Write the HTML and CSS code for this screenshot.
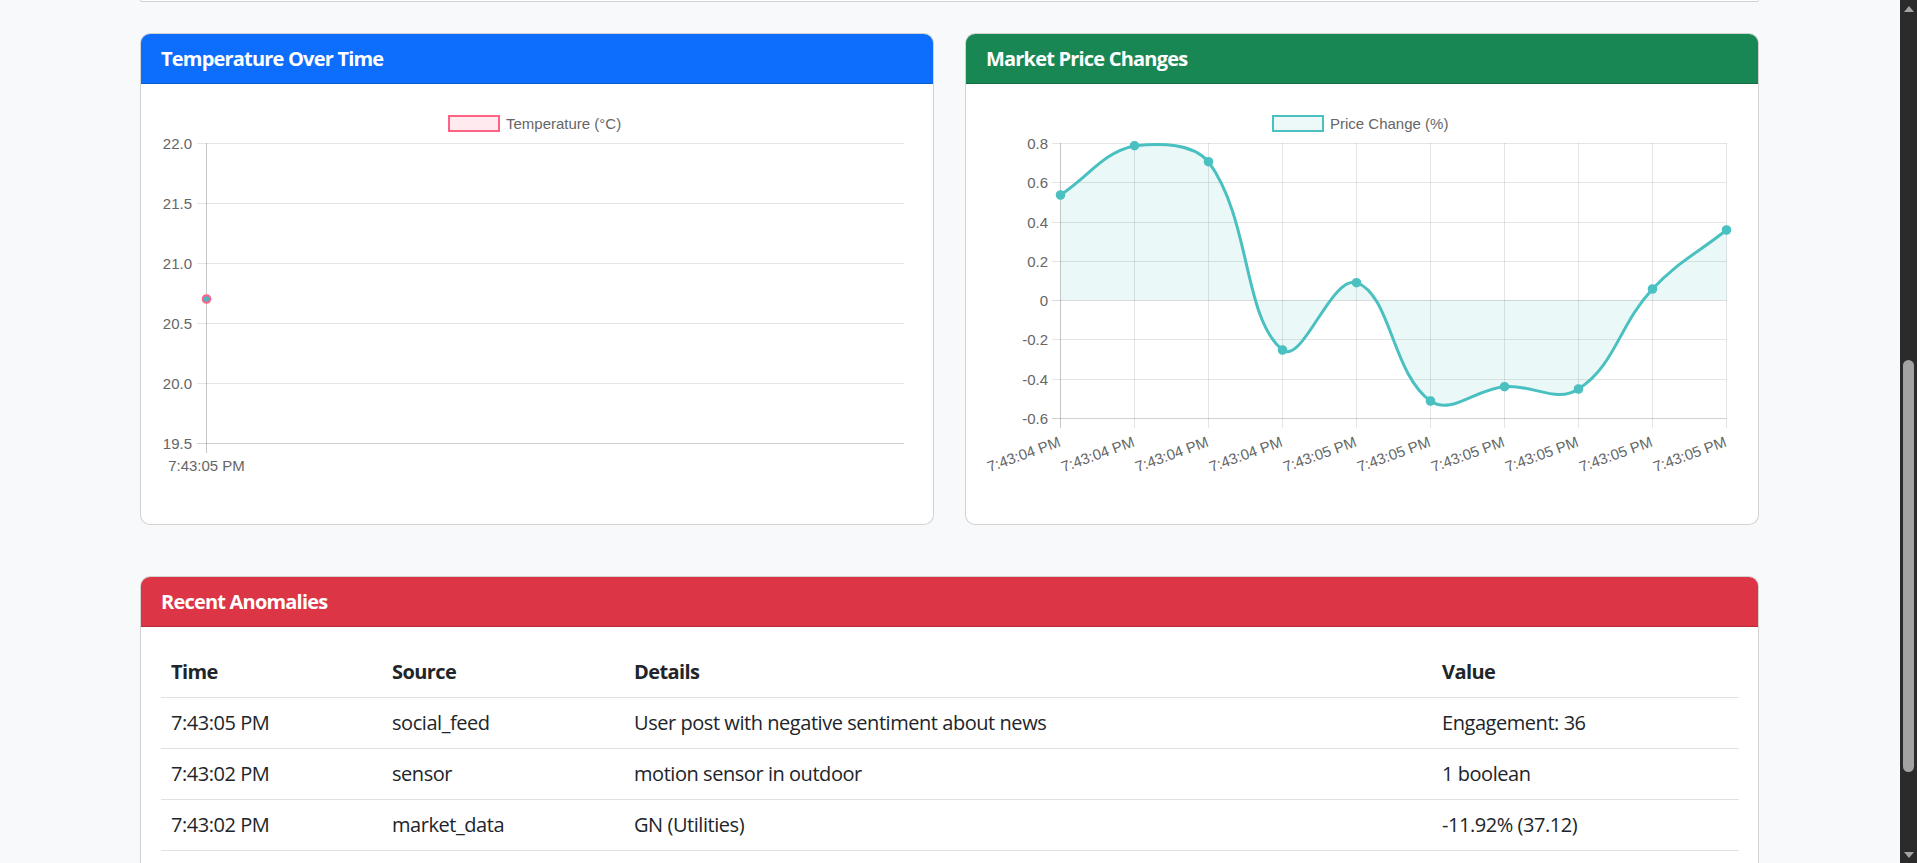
FILE: index.html
```html
<!DOCTYPE html>
<html lang="en">
<head>
<meta charset="utf-8">
<title>Dashboard</title>
<link rel="stylesheet" href="styles.css">
</head>
<body>
<div class="viewport">
  <main class="page">
    <div class="container">
      <div class="card-stub"></div>

      <div class="chart-row">
        <section class="card">
          <header class="card-header header-blue"><h5 class="card-title">Temperature Over Time</h5></header>
          <div class="card-body">
            <svg class="chart" viewBox="0 0 752 400" xmlns="http://www.w3.org/2000/svg">
              <rect class="legend-box-pink" x="288" y="12" width="50" height="15"/>
              <text class="chart-text" x="345" y="24.5">Temperature (°C)</text>

              <line class="grid" x1="36" y1="39.5" x2="743" y2="39.5"/>
              <line class="grid" x1="36" y1="99.5" x2="743" y2="99.5"/>
              <line class="grid" x1="36" y1="159.5" x2="743" y2="159.5"/>
              <line class="grid" x1="36" y1="219.5" x2="743" y2="219.5"/>
              <line class="grid" x1="36" y1="279.5" x2="743" y2="279.5"/>
              <line class="grid-strong" x1="36" y1="339.5" x2="743" y2="339.5"/>
              <line class="axis" x1="45.5" y1="39" x2="45.5" y2="349"/>

              <text class="chart-text" x="31" y="45" text-anchor="end">22.0</text>
              <text class="chart-text" x="31" y="105" text-anchor="end">21.5</text>
              <text class="chart-text" x="31" y="165" text-anchor="end">21.0</text>
              <text class="chart-text" x="31" y="225" text-anchor="end">20.5</text>
              <text class="chart-text" x="31" y="285" text-anchor="end">20.0</text>
              <text class="chart-text" x="31" y="345" text-anchor="end">19.5</text>

              <text class="chart-text" x="45.5" y="366.5" text-anchor="middle">7:43:05 PM</text>

              <circle class="temp-point" cx="45.5" cy="195" r="3.8"/>
            </svg>
          </div>
        </section>

        <section class="card">
          <header class="card-header header-green"><h5 class="card-title">Market Price Changes</h5></header>
          <div class="card-body">
            <svg class="chart" viewBox="0 0 752 400" xmlns="http://www.w3.org/2000/svg">
              <rect class="legend-box-teal" x="287" y="12" width="50" height="15"/>
              <text class="chart-text" x="344" y="24.5">Price Change (%)</text>

              <line class="grid" x1="66" y1="39.5" x2="740.5" y2="39.5"/>
              <line class="grid" x1="66" y1="78.5" x2="740.5" y2="78.5"/>
              <line class="grid" x1="66" y1="118.5" x2="740.5" y2="118.5"/>
              <line class="grid" x1="66" y1="157.5" x2="740.5" y2="157.5"/>
              <line class="grid-zero" x1="66" y1="196.5" x2="740.5" y2="196.5"/>
              <line class="grid" x1="66" y1="235.5" x2="740.5" y2="235.5"/>
              <line class="grid" x1="66" y1="275.5" x2="740.5" y2="275.5"/>
              <line class="grid-strong" x1="66" y1="314.5" x2="740.5" y2="314.5"/>

              <line class="axis" x1="74.5" y1="39" x2="74.5" y2="324"/>
              <line class="grid" x1="148.5" y1="39" x2="148.5" y2="324"/>
              <line class="grid" x1="222.5" y1="39" x2="222.5" y2="324"/>
              <line class="grid" x1="296.5" y1="39" x2="296.5" y2="324"/>
              <line class="grid" x1="370.5" y1="39" x2="370.5" y2="324"/>
              <line class="grid" x1="444.5" y1="39" x2="444.5" y2="324"/>
              <line class="grid" x1="518.5" y1="39" x2="518.5" y2="324"/>
              <line class="grid" x1="592.5" y1="39" x2="592.5" y2="324"/>
              <line class="grid" x1="666.5" y1="39" x2="666.5" y2="324"/>
              <line class="grid" x1="740.5" y1="39" x2="740.5" y2="324"/>

              <text class="chart-text" x="62" y="45" text-anchor="end">0.8</text>
              <text class="chart-text" x="62" y="84" text-anchor="end">0.6</text>
              <text class="chart-text" x="62" y="124" text-anchor="end">0.4</text>
              <text class="chart-text" x="62" y="163" text-anchor="end">0.2</text>
              <text class="chart-text" x="62" y="202" text-anchor="end">0</text>
              <text class="chart-text" x="62" y="241" text-anchor="end">-0.2</text>
              <text class="chart-text" x="62" y="281" text-anchor="end">-0.4</text>
              <text class="chart-text" x="62" y="320" text-anchor="end">-0.6</text>

              <path class="area" d="M74.5,91 C104.1,71.28 116.53,48.89 148.5,41.7 C175.73,39 206.38,39 222.5,57.7 C265.58,117.17 256.88,213.61 296.5,246 C316.08,262.01 345.78,170.18 370.5,178.7 C404.98,190.58 406.06,269.99 444.5,297 C465.26,311.59 488.63,285.12 518.5,282.7 C547.83,280.32 570.42,299.58 592.5,285 C629.62,260.5 632.87,221.12 666.5,185 C692.07,157.52 710.9,149.6 740.5,126 L740.5,196.1 L74.5,196.1 Z"/>
              <path class="line" d="M74.5,91 C104.1,71.28 116.53,48.89 148.5,41.7 C175.73,39 206.38,39 222.5,57.7 C265.58,117.17 256.88,213.61 296.5,246 C316.08,262.01 345.78,170.18 370.5,178.7 C404.98,190.58 406.06,269.99 444.5,297 C465.26,311.59 488.63,285.12 518.5,282.7 C547.83,280.32 570.42,299.58 592.5,285 C629.62,260.5 632.87,221.12 666.5,185 C692.07,157.52 710.9,149.6 740.5,126"/>

              <circle class="dot" cx="74.5" cy="91" r="4.2"/>
              <circle class="dot" cx="148.5" cy="41.7" r="4.2"/>
              <circle class="dot" cx="222.5" cy="57.7" r="4.2"/>
              <circle class="dot" cx="296.5" cy="246" r="4.2"/>
              <circle class="dot" cx="370.5" cy="178.7" r="4.2"/>
              <circle class="dot" cx="444.5" cy="297" r="4.2"/>
              <circle class="dot" cx="518.5" cy="282.7" r="4.2"/>
              <circle class="dot" cx="592.5" cy="285" r="4.2"/>
              <circle class="dot" cx="666.5" cy="185" r="4.2"/>
              <circle class="dot" cx="740.5" cy="126" r="4.2"/>

              <text class="chart-text" text-anchor="end" transform="translate(75.5 342) rotate(-20)">7:43:04 PM</text>
              <text class="chart-text" text-anchor="end" transform="translate(149.5 342) rotate(-20)">7:43:04 PM</text>
              <text class="chart-text" text-anchor="end" transform="translate(223.5 342) rotate(-20)">7:43:04 PM</text>
              <text class="chart-text" text-anchor="end" transform="translate(297.5 342) rotate(-20)">7:43:04 PM</text>
              <text class="chart-text" text-anchor="end" transform="translate(371.5 342) rotate(-20)">7:43:05 PM</text>
              <text class="chart-text" text-anchor="end" transform="translate(445.5 342) rotate(-20)">7:43:05 PM</text>
              <text class="chart-text" text-anchor="end" transform="translate(519.5 342) rotate(-20)">7:43:05 PM</text>
              <text class="chart-text" text-anchor="end" transform="translate(593.5 342) rotate(-20)">7:43:05 PM</text>
              <text class="chart-text" text-anchor="end" transform="translate(667.5 342) rotate(-20)">7:43:05 PM</text>
              <text class="chart-text" text-anchor="end" transform="translate(741.5 342) rotate(-20)">7:43:05 PM</text>
            </svg>
          </div>
        </section>
      </div>

      <section class="card">
        <header class="card-header header-red"><h5 class="card-title">Recent Anomalies</h5></header>
        <div class="card-body">
          <table class="table">
            <colgroup>
              <col class="col-time">
              <col class="col-source">
              <col class="col-details">
              <col class="col-value">
            </colgroup>
            <thead>
              <tr><th>Time</th><th>Source</th><th>Details</th><th>Value</th></tr>
            </thead>
            <tbody>
              <tr><td>7:43:05 PM</td><td>social_feed</td><td>User post with negative sentiment about news</td><td>Engagement: 36</td></tr>
              <tr><td>7:43:02 PM</td><td>sensor</td><td>motion sensor in outdoor</td><td>1 boolean</td></tr>
              <tr><td>7:43:02 PM</td><td>market_data</td><td>GN (Utilities)</td><td>-11.92% (37.12)</td></tr>
            </tbody>
          </table>
        </div>
      </section>
    </div>
  </main>

  <aside class="rail">
    <div class="rail-btn"><svg class="rail-arrow" viewBox="0 0 10 6" xmlns="http://www.w3.org/2000/svg"><polygon points="5,0 10,6 0,6"/></svg></div>
    <div class="rail-track"><div class="rail-thumb"></div></div>
    <div class="rail-btn"><svg class="rail-arrow" viewBox="0 0 10 6" xmlns="http://www.w3.org/2000/svg"><polygon points="0,0 10,0 5,6"/></svg></div>
  </aside>
</div>
</body>
</html>
```

FILE: styles.css
```css
html {
  margin: 0;
  padding: 0;
  background: linear-gradient(to right, #f8f9fa 1900px, #2b2b2b 1900px);
}

body {
  margin: 0;
  padding: 0;
  background: linear-gradient(to right, #f8f9fa 1900px, #2b2b2b 1900px);
  color: #212529;
  font-family: "Open Sans", "Noto Sans", "Liberation Sans", sans-serif;
  font-size: 20px;
  line-height: 1.5;
  letter-spacing: -0.45px;
  overflow: hidden;
}

.viewport {
  display: grid;
  grid-template-columns: 1900px 17px;
  width: 1917px;
  height: 863px;
  overflow: hidden;
}

.page {
  min-width: 0;
  overflow: hidden;
  background: #f8f9fa;
}

.container {
  width: 1619px;
  margin-left: 140px;
}

.card-stub {
  height: 1px;
  background: #fff;
  border: 1px solid rgba(0, 0, 0, 0.175);
  border-top: 0;
  border-radius: 0 0 10px 10px;
  margin-bottom: 31px;
}

.chart-row {
  display: grid;
  grid-template-columns: 1fr 1fr;
  gap: 31px;
  margin-bottom: 51px;
}

.card {
  background: #fff;
  border: 1px solid rgba(0, 0, 0, 0.175);
  border-radius: 10px;
  overflow: hidden;
}

.card-header {
  padding: 10px 20px;
  line-height: 29px;
  color: #fff;
  border-bottom: 1px solid rgba(0, 0, 0, 0.175);
}

.header-blue { background: #0d6efd; }
.header-green { background: #198754; }
.header-red { background: #dc3545; }

.card-title {
  margin: 0;
  font-size: 20px;
  font-weight: 700;
  line-height: 29px;
  letter-spacing: -0.8px;
}

.card-body {
  padding: 20px;
}

.chart {
  display: block;
  width: 100%;
  height: 400px;
  letter-spacing: 0;
}

.chart-text {
  font-family: "Liberation Sans", Arial, sans-serif;
  font-size: 15px;
  letter-spacing: 0;
  fill: #666;
}

.grid {
  stroke: rgba(0, 0, 0, 0.1);
  stroke-width: 1;
}

.grid-zero {
  stroke: rgba(0, 0, 0, 0.14);
  stroke-width: 1;
}

.grid-strong {
  stroke: rgba(0, 0, 0, 0.18);
  stroke-width: 1;
}

.axis {
  stroke: rgba(0, 0, 0, 0.22);
  stroke-width: 1;
}

.legend-box-pink {
  fill: rgba(255, 99, 132, 0.13);
  stroke: #ff6384;
  stroke-width: 2;
}

.legend-box-teal {
  fill: rgba(75, 192, 192, 0.1);
  stroke: #4bc0c0;
  stroke-width: 2;
}

.temp-point {
  fill: #4fb3c2;
  stroke: #ff6384;
  stroke-width: 2;
}

.area {
  fill: rgba(75, 192, 192, 0.11);
  stroke: none;
}

.line {
  fill: none;
  stroke: #4bc0c0;
  stroke-width: 3;
}

.dot {
  fill: #4bc0c0;
  stroke: #4bc0c0;
  stroke-width: 1.2;
}

.table {
  width: 100%;
  border-collapse: collapse;
  table-layout: fixed;
}

.col-time { width: 221px; }
.col-source { width: 242px; }
.col-details { width: 808px; }
.col-value { width: 307px; }

.table th,
.table td {
  padding: 10px;
  line-height: 30px;
  text-align: left;
  vertical-align: top;
  border-bottom: 1px solid #dee2e6;
  white-space: nowrap;
}

.table th {
  font-weight: 700;
  letter-spacing: -0.6px;
}

.table td {
  font-weight: 400;
}

.rail {
  position: relative;
  z-index: 5;
  display: flex;
  flex-direction: column;
  width: 17px;
  height: 863px;
  background-color: #2b2b2b;
}

.rail-btn {
  height: 17px;
  flex: 0 0 17px;
  display: flex;
  align-items: center;
  justify-content: center;
  background-color: #2b2b2b;
}

.rail-arrow {
  display: block;
  width: 10px;
  height: 6px;
  fill: #a3a3a3;
}

.rail-track {
  flex: 1 1 auto;
  padding: 343px 3px 0;
  background-color: #2b2b2b;
}

.rail-thumb {
  width: 11px;
  height: 412px;
  border-radius: 6px;
  background-color: #a3a3a3;
}
```
